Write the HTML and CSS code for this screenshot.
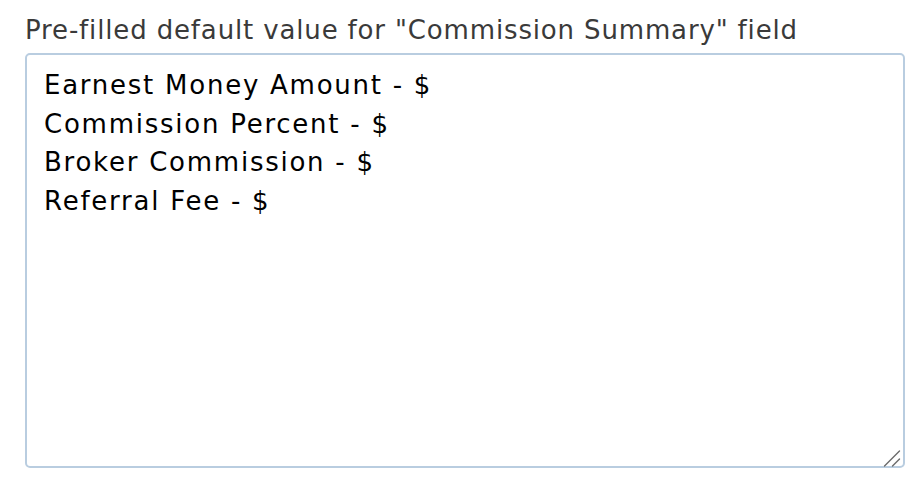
FILE: index.html
```html
<!DOCTYPE html>
<html>
<head>
<meta charset="utf-8">
<link rel="stylesheet" href="styles.css">
</head>
<body>
<div class="field">
  <label class="field-label" for="summary">Pre-filled default value for "Commission Summary" field</label>
  <div class="input-wrap">
    <textarea class="field-input" id="summary">Earnest Money Amount - $
Commission Percent - $
Broker Commission - $
Referral Fee - $</textarea>
    <svg class="resize-grip" width="18" height="18" viewBox="0 0 18 18" aria-hidden="true">
      <line x1="1.5" y1="17" x2="16.5" y2="2" />
      <line x1="9.5" y1="17" x2="16.5" y2="10" />
    </svg>
  </div>
</div>
</body>
</html>
```
FILE: styles.css
```css
html, body {
  margin: 0;
  padding: 0;
  background: #ffffff;
}
.field {
  padding: 13px 0 0 25px;
  display: flex;
  flex-direction: column;
  align-items: flex-start;
  font-family: "DejaVu Sans", sans-serif;
}
.field-label {
  font-size: 26px;
  line-height: 34px;
  color: #3a3a3a;
  margin-left: 0;
  margin-bottom: 6px;
  letter-spacing: 0.85px;
}
.input-wrap {
  position: relative;
  display: flex;
}
.field-input {
  box-sizing: border-box;
  width: 880px;
  height: 415px;
  border: 2px solid #b9cde0;
  border-radius: 5px;
  padding: 11px 15px 11px 17px;
  font-family: "DejaVu Sans", sans-serif;
  font-size: 26px;
  line-height: 38.7px;
  color: #000000;
  letter-spacing: 1.75px;
  margin: 0;
  outline: none;
  resize: none;
}
.resize-grip {
  position: absolute;
  right: 4px;
  bottom: 1px;
  stroke: #6b6b6b;
  stroke-width: 1.4;
  stroke-linecap: round;
  pointer-events: none;
}
```
